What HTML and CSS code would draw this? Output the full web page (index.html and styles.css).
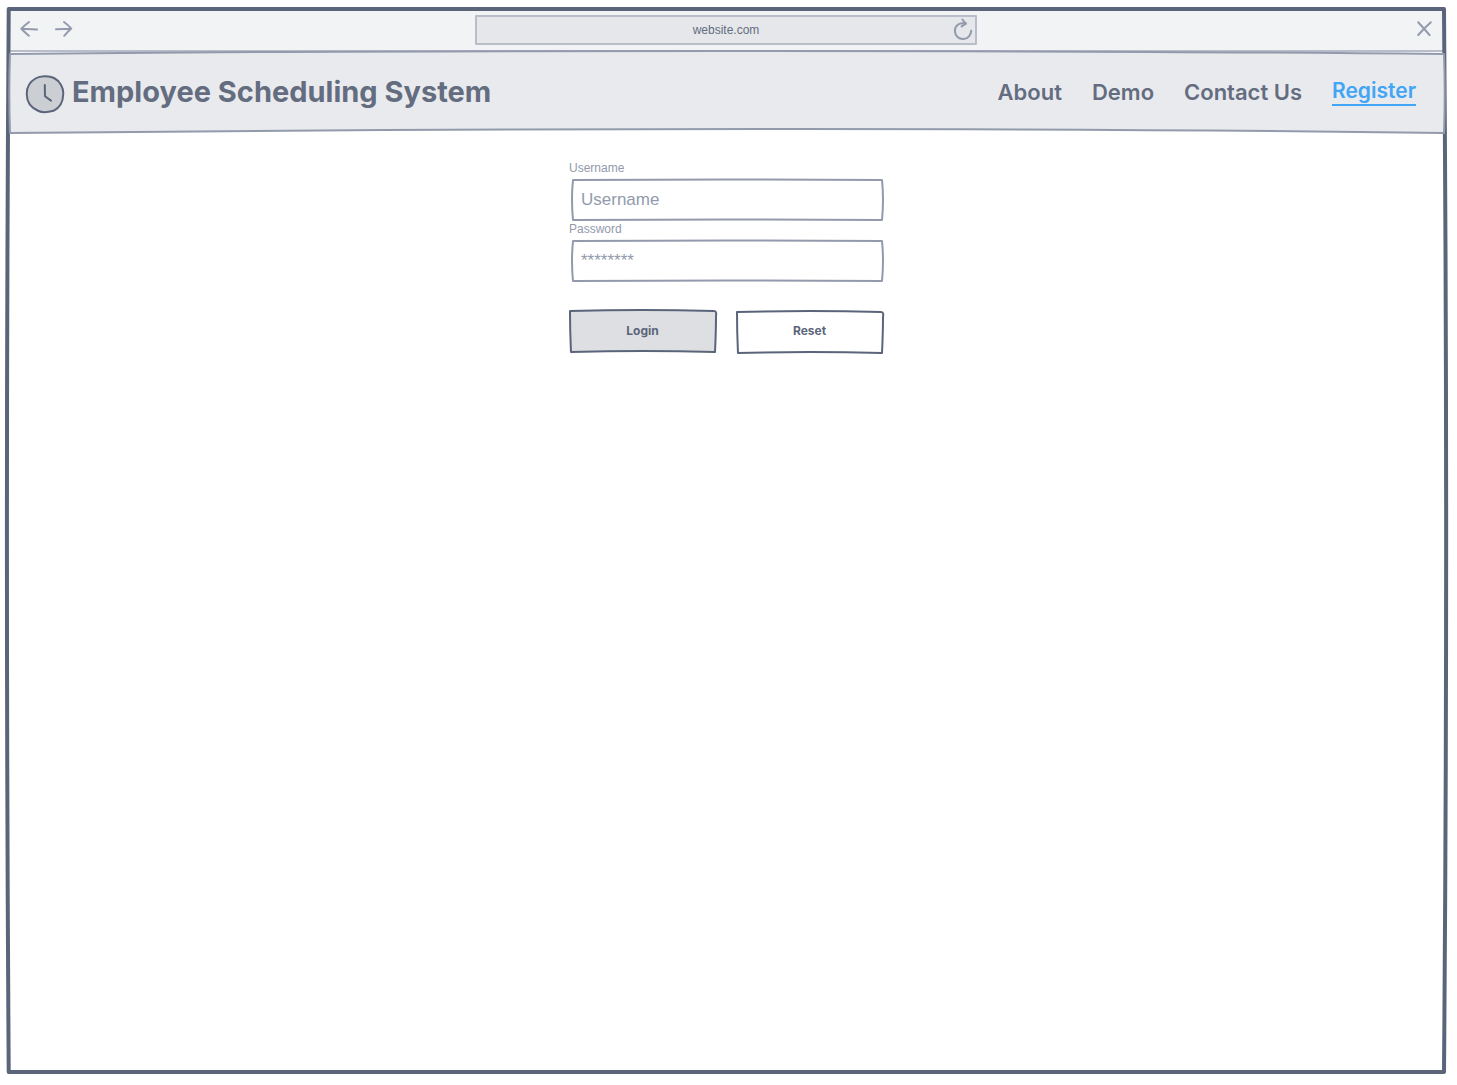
FILE: index.html
```html
<!DOCTYPE html>
<html lang="en">
<head>
<meta charset="utf-8">
<meta name="viewport" content="width=device-width, initial-scale=1">
<title>Employee Scheduling System</title>
<link rel="stylesheet" href="styles.css">
</head>
<body>
<div class="window">
  <div class="toolbar">
    <div class="history">
      <button class="icon-button" type="button" aria-label="Back">
        <svg width="20" height="20" viewBox="0 0 20 20"><path d="M18 10.6 Q10 10.2 2.5 9.8 M10 3 Q6 6 2.3 9.8 Q6 13.5 9.8 16.8"/></svg>
      </button>
      <button class="icon-button" type="button" aria-label="Forward">
        <svg width="20" height="20" viewBox="0 0 20 20"><path d="M2 10.2 Q10 10 17 9.8 M10 3 Q13.5 5.5 17.3 9.6 Q13.5 13 10.2 16.8"/></svg>
      </button>
    </div>
    <div class="address">
      <input class="address-input" type="text" value="website.com" aria-label="Address">
      <button class="icon-button reload" type="button" aria-label="Reload">
        <svg width="20" height="24" viewBox="0 0 20 24"><path d="M12.2 5.6 C6 3.8 1.8 8.2 1.9 13 C2 18 5.8 21.2 10.6 21 C15.2 20.8 18 17 18.2 12.8 M9.4 1.5 Q11 3.8 13 5.6 Q10.8 7 8.6 8.4"/></svg>
      </button>
    </div>
    <button class="icon-button close" type="button" aria-label="Close">
      <svg width="20" height="20" viewBox="0 0 20 20"><path d="M4.2 3.2 Q10 9.400 15.6 16.2 M16.8 3.2 Q10.5 8.900 4.2 16"/></svg>
    </button>
  </div>

  <svg class="sketch frame" viewBox="0 0 1000 1000" preserveAspectRatio="none" aria-hidden="true"><path d="M0.500 0 Q500 -1 1000 0 Q1003 500 1000 1000 Q500 999 0.500 1000 Q-2 500 0.500 0 Z"/></svg>

  <header class="header">
    <svg class="sketch header-frame" viewBox="0 0 1000 80" preserveAspectRatio="none" aria-hidden="true"><path d="M0 2 Q160 -1 500 -1 Q800 -1 1000 2 Q1001 40 1000 81 Q800 77 550 77 Q300 77 0 81 Q-1 40 0 2 Z"/></svg>
    <div class="brand">
      <svg class="clock" width="40" height="40" viewBox="0 0 40 40" aria-hidden="true"><path class="clock-face" d="M10.500 4.500 C15 1.800 24 1.500 29 4 C35 7 38.800 14 38.200 20.500 C38 28 34.500 34 28.500 36.800 C24 38 17 38.600 13.500 37 C6.500 34 1.800 28 1.800 20.500 C1.500 14 4.500 8 10.500 4.500 Z"/><path class="clock-hands" d="M19.800 11 L20 22.200 L26 26.600"/></svg>
      <h1 class="title">Employee Scheduling System</h1>
    </div>
    <nav class="nav">
      <a class="nav-link" href="#about">About</a>
      <a class="nav-link" href="#demo">Demo</a>
      <a class="nav-link" href="#contact">Contact Us</a>
      <a class="nav-link register" href="#register">Register</a>
    </nav>
  </header>

  <main class="main">
    <form class="login">
      <label class="label" for="username">Username</label>
      <div class="field">
        <svg class="sketch field-frame" viewBox="0 0 312 41" preserveAspectRatio="none" aria-hidden="true"><path d="M2 1 Q156 0 311 1 Q313 20 311 41 Q156 40 2 41 Q0 20 2 1 Z"/></svg>
        <input class="input" id="username" type="text" placeholder="Username">
      </div>
      <label class="label" for="password">Password</label>
      <div class="field">
        <svg class="sketch field-frame" viewBox="0 0 312 41" preserveAspectRatio="none" aria-hidden="true"><path d="M2 1 Q156 0 311 1 Q313 20 311 41 Q156 40 2 41 Q0 20 2 1 Z"/></svg>
        <input class="input" id="password" type="password" placeholder="********">
      </div>
      <div class="actions">
        <button class="button primary" type="submit">
          <svg class="sketch button-frame" viewBox="0 0 148 44" preserveAspectRatio="none" aria-hidden="true"><path d="M1 2 Q74 0 146 2 Q149 2 148 7 Q148 22 147 43 Q74 41 2 43 Q1 22 1 2 Z"/></svg>
          <span class="button-text">Login</span>
        </button>
        <button class="button" type="reset">
          <svg class="sketch button-frame" viewBox="0 0 148 44" preserveAspectRatio="none" aria-hidden="true"><path d="M1 3 Q74 1 146 3 Q149 3 148 8 Q148 23 147 44 Q74 42 2 44 Q1 23 1 3 Z"/></svg>
          <span class="button-text">Reset</span>
        </button>
      </div>
    </form>
  </main>
</div>
</body>
</html>
```
FILE: styles.css
```css
* {
  box-sizing: border-box;
}

body {
  margin: 0;
  padding: 9px 13px 13px 8px;
  min-height: 100vh;
  display: flex;
  background: #fff;
  color: #646d80;
  font-family: "Liberation Sans", Arial, sans-serif;
}

.window {
  position: relative;
  flex: 1;
  display: flex;
  flex-direction: column;
}

/* Hand-drawn outlines that lie behind their box */
.sketch {
  position: absolute;
  inset: 0;
  width: 100%;
  height: 100%;
  overflow: visible;
  pointer-events: none;
}

.sketch path {
  fill: none;
  stroke: #929aac;
  stroke-width: 2;
  stroke-linejoin: round;
  vector-effect: non-scaling-stroke;
}

.frame path {
  stroke: #5b657a;
  stroke-width: 4;
}

.toolbar {
  display: grid;
  grid-template-columns: 1fr minmax(0, 502px) 1fr;
  align-items: center;
  height: 43px;
  padding: 0 10px;
  background: #f2f3f5;
  border-bottom: 2px solid #b9bdc9;
}

.history {
  display: flex;
  gap: 15px;
  padding: 0 0 2px 1px;
}

.icon-button {
  display: flex;
  padding: 0;
  border: 0;
  background: none;
}

.icon-button path {
  fill: none;
  stroke: #929aac;
  stroke-width: 2;
  stroke-linecap: round;
  stroke-linejoin: round;
}

.address {
  display: grid;
  align-items: center;
}

.address-input,
.reload {
  grid-area: 1 / 1;
}

.address-input {
  width: 100%;
  height: 30px;
  padding: 1px 32px 0;
  border: 2px solid #b9bdc9;
  border-radius: 1px;
  background: #e6e7eb;
  color: #646d80;
  font: 12px/16px "Liberation Sans", Arial, sans-serif;
  text-align: center;
}

.reload {
  justify-self: end;
  margin-right: 4px;
}

.close {
  justify-self: end;
  padding-bottom: 2px;
}

.header {
  position: relative;
  display: flex;
  align-items: center;
  justify-content: space-between;
  height: 80px;
  margin-left: 2px;
  padding: 0 28px 0 15px;
  font-family: Inter, "Liberation Sans", sans-serif;
}

.header-frame path {
  fill: #e9eaee;
}

.brand {
  position: relative;
  display: flex;
  align-items: center;
  gap: 7px;
}

.clock {
  margin-top: 4px;
}

.clock-face {
  fill: #cbced3;
  stroke: #5b657a;
  stroke-width: 2;
}

.clock-hands {
  fill: none;
  stroke: #5b657a;
  stroke-width: 2;
  stroke-linecap: round;
  stroke-linejoin: round;
}

.title {
  margin: 0;
  font-size: 29px;
  line-height: 40px;
  font-weight: 700;
}

.nav {
  position: relative;
  display: flex;
  align-items: center;
  gap: 30px;
}

.nav-link {
  color: #646d80;
  font-size: 22px;
  line-height: 28px;
  font-weight: 600;
  text-decoration: none;
}

.register {
  color: #42a5f5;
  font-size: 21px;
  line-height: 26px;
  border-bottom: 2px solid #42a5f5;
}

.main {
  flex: 1;
  display: flex;
  justify-content: center;
  padding: 29px 16px;
}

.login {
  display: flex;
  flex-direction: column;
  width: 314px;
}

.label {
  margin-bottom: 4px;
  color: #929aac;
  font-size: 12px;
  line-height: 14px;
}

.field {
  position: relative;
  margin: 0 0 2px 2px;
}

.input {
  position: relative;
  display: block;
  width: 100%;
  height: 41px;
  padding: 1px 10px 0;
  border: 0;
  background: none;
  color: #646d80;
  font: 17px/20px "Liberation Sans", Arial, sans-serif;
}

.input::placeholder {
  color: #929aac;
  opacity: 1;
}

.actions {
  display: flex;
  gap: 20px;
  margin-top: 26px;
}

.button {
  position: relative;
  flex: 1;
  height: 44px;
  padding: 0;
  border: 0;
  background: none;
  color: #5b657a;
  font: 700 12px/16px Inter, "Liberation Sans", sans-serif;
}

.button-frame path {
  stroke: #5b657a;
}

.primary path {
  fill: #dedfe3;
}

.button-text {
  position: relative;
}
```
